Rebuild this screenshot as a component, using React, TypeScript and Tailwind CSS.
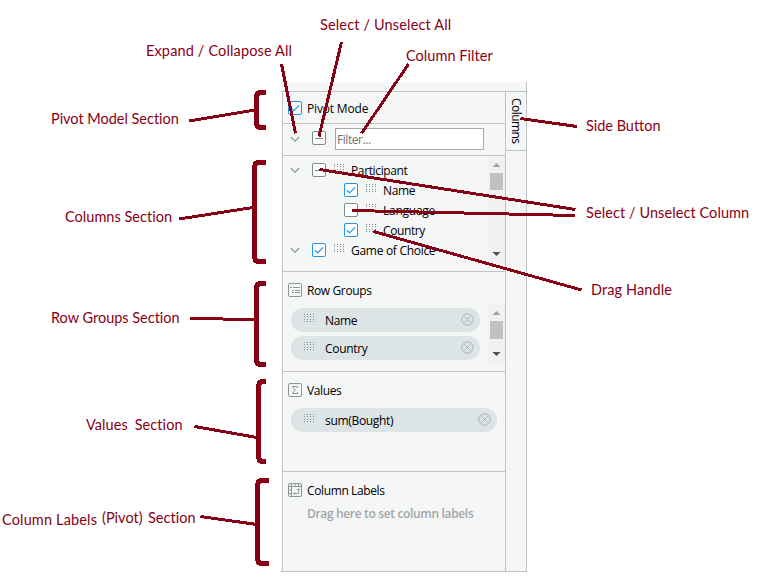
import type { ReactNode } from "react";

type CheckState = "on" | "off" | "mixed";

function Checkbox({ state, className = "" }: { state: CheckState; className?: string }) {
  return (
    <span
      className={`flex size-[14px] shrink-0 items-center justify-center rounded-[2px] border bg-white ${
        state === "on" ? "border-[#2196f3]" : "border-[#7f8c8d]"
      } ${className}`}
    >
      <svg className="shrink-0" width="12" height="12" viewBox="0 0 12 12" fill="none">
        {state === "on" && <path d="M2 6.3 L4.6 8.8 L10 3.3" stroke="#2196f3" strokeWidth="1.2" />}
        {state === "mixed" && <path d="M2 6.5 H10" stroke="#7f8c8d" />}
      </svg>
    </span>
  );
}

function Chevron() {
  return (
    <svg className="shrink-0" width="14" height="14" viewBox="0 0 14 14" fill="none">
      <path d="M2.8 5 L7 9.2 L11.2 5" stroke="#8b9798" strokeWidth="1.2" />
    </svg>
  );
}

function DragHandle({ className = "" }: { className?: string }) {
  return (
    <svg className={`shrink-0 ${className}`} width="10" height="9" viewBox="0 0 10 9" shapeRendering="crispEdges">
      {[0, 3, 6, 9].map((x) =>
        [0, 2, 5, 7].map((y) => <rect key={`${x}-${y}`} x={x} y={y} width="1" height="1" fill="#7f8c8d" />),
      )}
    </svg>
  );
}

function TreeRow({
  label,
  state,
  child = false,
  tracking,
}: {
  label: string;
  state: CheckState;
  child?: boolean;
  tracking: string;
}) {
  return (
    <div className={`flex h-5 items-center ${child ? "pl-[61px]" : "pl-[5px]"}`}>
      {!child && (
        <span className="mr-[10px] flex">
          <Chevron />
        </span>
      )}
      <Checkbox state={state} />
      <DragHandle className="-mt-[3px] ml-2 mr-[7px]" />
      <span className={`mt-[2px] leading-5 ${tracking}`}>{label}</span>
    </div>
  );
}

function ScrollBar({ height, thumb }: { height: string; thumb: string }) {
  return (
    <div className={`flex w-[17px] shrink-0 flex-col items-center bg-[#f1f1f1] ${height}`}>
      <svg className="shrink-0" width="17" height="17" viewBox="0 0 17 17">
        <path d="M4.500 11 L8.500 7 L12.500 11Z" fill="#a3a3a3" />
      </svg>
      <div className={`w-[13px] bg-[#c1c1c1] ${thumb}`} />
      <svg className="mt-auto shrink-0" width="17" height="17" viewBox="0 0 17 17">
        <path d="M4.500 6 L8.500 10 L12.500 6Z" fill="#505050" />
      </svg>
    </div>
  );
}

function Pill({ label, width }: { label: string; width: string }) {
  return (
    <div className={`flex h-6 items-center rounded-full bg-[#dde4e6] pl-[13px] pr-[6px] ${width}`}>
      <DragHandle className="-mt-[4px]" />
      <span className="ml-[11px] mt-[2px] leading-5 tracking-[-0.32px]">{label}</span>
      <svg className="-mt-px ml-auto" width="13" height="13" viewBox="0 0 13 13" fill="none" stroke="#a9b3b5">
        <circle cx="6.5" cy="6.5" r="5.7" />
        <path d="M3.3 3.3 L9.7 9.7 M9.7 3.3 L3.3 9.7" />
      </svg>
    </div>
  );
}

function SectionHeader({ icon, label }: { icon: ReactNode; label: string }) {
  return (
    <div className="flex h-9 items-center pl-[5px]">
      <svg width="14" height="14" viewBox="0 0 14 14" fill="none" stroke="#8b9798">
        <rect x="0.5" y="0.5" width="13" height="13" rx="1.5" />
        {icon}
      </svg>
      <span className="ml-[5px] mt-[2px] leading-5 tracking-[-0.38px]">{label}</span>
    </div>
  );
}

function ToolPanel() {
  return (
    <div className="ml-[281px] flex h-[490px] w-[246px] flex-col border-r border-[#bdc3c7] bg-[#f5f7f7] font-['Open_Sans',sans-serif] text-[12px] text-black">
      <div className="h-[9px] shrink-0" />
      <div className="flex grow border-y border-[#bdc3c7]">
        <div className="w-px bg-white" />
        <div className="flex w-[224px] flex-col border-x border-[#bdc3c7]">
          <div className="flex h-8 items-center border-b border-[#bdc3c7] pl-[5px] pt-px">
            <Checkbox state="on" />
            <span className="ml-[5px] mt-[2px] leading-5 tracking-[-0.17px]">Pivot Mode</span>
          </div>
          <div className="flex h-8 items-center border-b border-[#bdc3c7] pb-px pl-[5px]">
            <Chevron />
            <Checkbox state="mixed" className="-mt-[2px] ml-[10px]" />
            <input
              className="ml-[9px] h-[22px] w-[149px] border border-[#a9a9a9] bg-white pl-px pr-0.5 pt-px tracking-[-0.45px] placeholder:text-[#757575]"
              placeholder="Filter..."
            />
          </div>
          <div className="flex h-[116px] border-b border-[#bdc3c7]">
            <div className="grow pt-1">
              <TreeRow label="Participant" state="mixed" tracking="tracking-[-0.37px]" />
              <TreeRow label="Name" state="on" child tracking="tracking-[-0.35px]" />
              <TreeRow label="Language" state="off" child tracking="tracking-[-0.25px]" />
              <TreeRow label="Country" state="on" child tracking="tracking-[-0.4px]" />
              <TreeRow label="Game of Choice" state="on" tracking="tracking-[-0.29px]" />
            </div>
            <ScrollBar height="h-[107px]" thumb="h-[17px]" />
          </div>
          <div className="h-[100px] border-b border-[#bdc3c7]">
            <SectionHeader
              label="Row Groups"
              icon={<path d="M2 4.5 H4 M5 4.5 H12 M4 7.5 H6 M7 7.5 H12 M4 9.5 H6 M7 9.5 H12" />}
            />
            <div className="-mt-1 flex justify-between pl-2">
              <div className="flex flex-col gap-1 pt-1">
                <Pill label="Name" width="w-[189px]" />
                <Pill label="Country" width="w-[189px]" />
              </div>
              <ScrollBar height="h-[59px]" thumb="h-[18px]" />
            </div>
          </div>
          <div className="h-[100px] border-b border-[#bdc3c7]">
            <SectionHeader label="Values" icon={<path d="M9.500 5 V3.500 H4.500 L7.300 7 L4.500 10.500 H9.500 V9" />} />
            <div className="pl-2">
              <Pill label="sum(Bought)" width="w-[206px]" />
            </div>
          </div>
          <div>
            <SectionHeader
              label="Column Labels"
              icon={
                <>
                  <path d="M0 3.5 H14 M3.5 0 V14 M7 0 V3.5 M10.5 0 V3.5 M0 7 H3.5 M0 10.5 H3.5" />
                  <path d="M6 10.5 H10.5 V6 M7 9 L5.5 10.5 L7 12 M9 7 L10.5 5.5 L12 7" strokeWidth="0.9" />
                </>
              }
            />
            <p className="-mt-[4px] whitespace-nowrap pl-6 font-semibold leading-5 tracking-[-0.34px] text-[#a2a5a6]">
              Drag here to set column labels
            </p>
          </div>
        </div>
        <div className="grow">
          <div className="flex h-[59px] items-center justify-center border-b border-[#bdc3c7]">
            <span className="leading-5 tracking-[-0.55px] [writing-mode:vertical-rl]">Columns</span>
          </div>
        </div>
      </div>
    </div>
  );
}

const callouts = [
  { text: "Select / Unselect All", place: "left-[320px] top-[15px] tracking-[0.15px]" },
  { text: "Expand / Collapose All", place: "left-[146px] top-[41px] tracking-[0.14px]" },
  { text: "Column Filter", place: "left-[406px] top-[46px] tracking-[0.05px]" },
  { text: "Pivot Model Section", place: "left-[51px] top-[109px] tracking-[-0.02px]" },
  { text: "Columns Section", place: "left-[65px] top-[207px] tracking-[0.03px]" },
  { text: "Row Groups Section", place: "left-[51px] top-[308px] tracking-[-0.01px]" },
  { text: "Values Section", place: "left-[86px] top-[415px] tracking-[0.08px] [word-spacing:3px]" },
  { text: "Column Labels", place: "left-[2px] top-[510px] tracking-[0.15px]" },
  { text: "(Pivot) Section", place: "left-[102px] top-[508px] tracking-[0.03px] [word-spacing:1.5px]" },
  { text: "Side Button", place: "left-[586px] top-[116px] tracking-[-0.02px]" },
  { text: "Select / Unselect Column", place: "left-[586px] top-[203px] tracking-[0.08px]" },
  { text: "Drag Handle", place: "left-[591px] top-[280px] tracking-[0.1px]" },
];

const pointers = [
  "M281.5 64 L295.5 133.5",
  "M341.5 42 L319 136.5",
  "M408.5 64 L361.5 133.5",
  "M189 121 L255 110",
  "M179 219 L253 207.5",
  "M190 318.5 H223 M223 319.5 H256",
  "M194.5 426.5 L257 437.5",
  "M200.5 516.5 L257 524.5",
  "M520.5 118.5 L577 126.5",
  "M319.5 169.5 L575.5 209.5",
  "M352 210.5 L575 215.5",
  "M373.5 231.5 L581.5 290",
];

function bracket(x: number, top: number, bottom: number, right: number) {
  return `M${right} ${top} H${x + 4} Q${x} ${top} ${x} ${top + 6} V${bottom - 6} Q${x} ${bottom} ${x + 4} ${bottom} H${right}`;
}

const brackets = [
  bracket(256.5, 92.5, 127.5, 266),
  bracket(254.5, 162.5, 261.5, 266),
  bracket(256.5, 283.5, 364.5, 266),
  bracket(258.5, 381.5, 461.5, 266),
  bracket(257.5, 480.5, 563.5, 269),
];

export default function App() {
  return (
    <div className="relative h-[579px] w-[759px] overflow-hidden bg-white pt-[82px]">
      <ToolPanel />
      <svg
        className="pointer-events-none absolute inset-0"
        width="759"
        height="579"
        fill="none"
        stroke="#880015"
        shapeRendering="crispEdges"
      >
        {pointers.map((d) => (
          <path key={d} d={d} strokeWidth="3" />
        ))}
        {brackets.map((d) => (
          <path key={d} d={d} strokeWidth="5" />
        ))}
      </svg>
      {callouts.map(({ text, place }) => (
        <span
          key={text}
          className={`absolute whitespace-nowrap font-[Lato,sans-serif] text-[14.5px] leading-5 text-[#880015] [font-variant-ligatures:none] ${place}`}
        >
          {text}
        </span>
      ))}
    </div>
  );
}
